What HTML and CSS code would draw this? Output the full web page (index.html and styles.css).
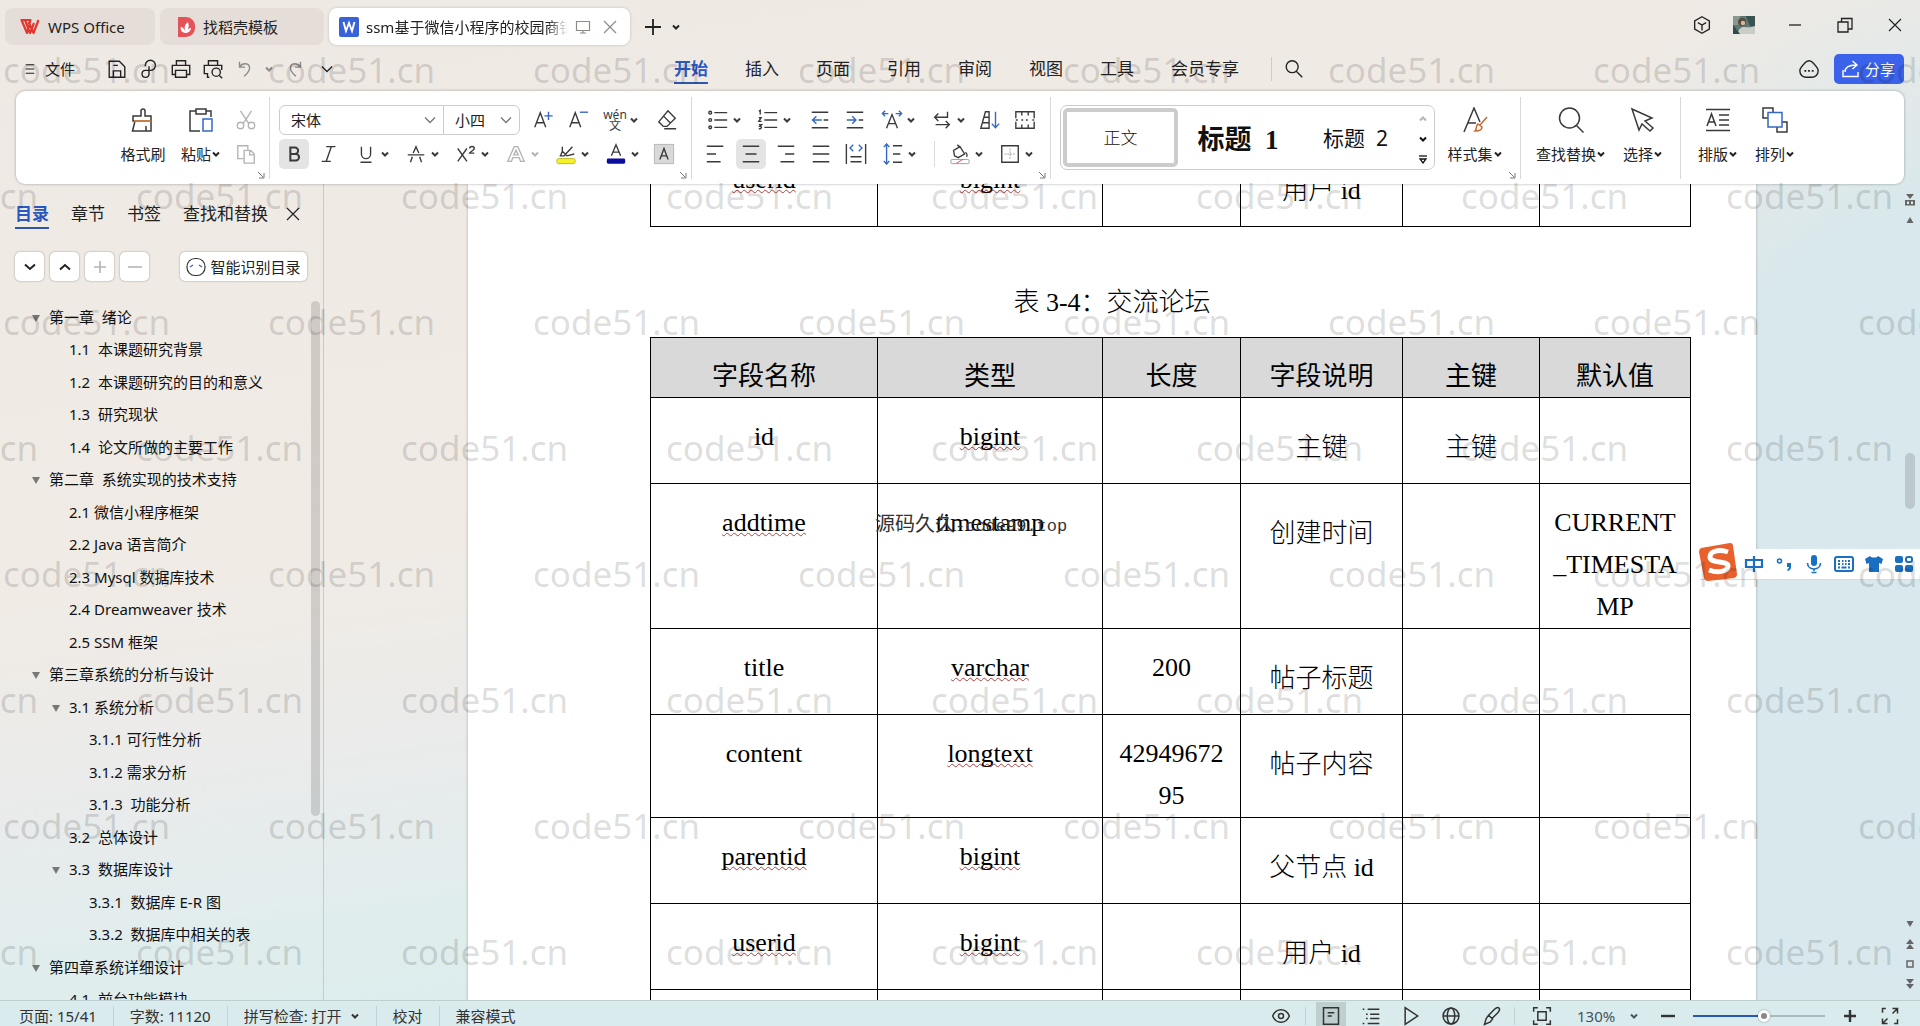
FILE: index.html
```html
<!DOCTYPE html>
<html lang="zh-CN">
<head>
<meta charset="utf-8">
<title>WPS Office</title>
<link rel="stylesheet" href="styles.css">
</head>
<body>
<svg class="defs" aria-hidden="true">
  <symbol id="caret" viewBox="0 0 10 10"><path d="M2 3.500l3 3 3-3" fill="none" stroke="currentColor" stroke-width="2"/></symbol>
  <symbol id="chev" viewBox="0 0 14 14"><path d="M2 4.500l5 5 5-5" fill="none" stroke="currentColor" stroke-width="1.300"/></symbol>
  <symbol id="cross" viewBox="0 0 16 16"><path d="M2 2l12 12M14 2L2 14" fill="none" stroke="currentColor" stroke-width="1.200"/></symbol>
  <symbol id="corner" viewBox="0 0 8 8"><path d="M1 1l5 5M7 2v5H2" fill="none" stroke="currentColor"/></symbol>
</svg>
<div class="app">
  <header class="titlebar">
    <div class="tabs">
      <button class="tab tab-home"><svg class="logo" viewBox="0 0 20 18"><path d="M1.500 2h9l-3.500 13L1.500 2zM18.500 2l-5 13L8.500 4M5 2l5 13 4-10" fill="none" stroke="#e2382f" stroke-width="2.200" stroke-linejoin="round"/></svg>WPS Office</button>
      <button class="tab tab-tpl"><svg class="logo" viewBox="0 0 20 20"><path d="M2 0h8a9 9 0 0 1 9 10 9 9 0 0 1-9 10H2z" fill="#e4535a"/><path d="M9 16c-4-1-5-4-4-6 2 0 3 2 4 4-1-4 0-7 3-9 1 3 1 6-1 9 1-2 2-3 4-3 0 3-3 5-6 5z" fill="#fff"/></svg>找稻壳模板</button>
      <button class="tab tab-doc active"><svg class="logo" viewBox="0 0 20 20"><rect width="20" height="20" rx="2" fill="#3a62d8"/><path d="M4.500 5l2.500 9 3-8 3 8 2.500-9" fill="none" stroke="#fff" stroke-width="1.900"/></svg><span class="doc-name">ssm基于微信小程序的校园商铺</span>
        <svg class="s16 dim" viewBox="0 0 16 16"><path d="M1.500 2.500h13v9h-13zM5 14h6M8 11.500V14" fill="none" stroke="currentColor" stroke-width="1.200"/></svg>
        <svg class="s16 dim"><use href="#cross"/></svg></button>
      <button class="icon-btn new-tab" aria-label="新建"><svg class="s18" viewBox="0 0 18 18"><path d="M9 1v16M1 9h16" stroke="currentColor" stroke-width="1.800"/></svg></button>
      <button class="icon-btn more-tabs" aria-label="更多标签"><svg class="s10"><use href="#caret"/></svg></button>
    </div>
    <div class="win">
      <button class="icon-btn" aria-label="应用"><svg class="i" viewBox="0 0 24 24"><path d="M12 3l8 4.500v9L12 21l-8-4.500v-9zM7.500 9.500L12 12l4.500-2.500M12 12v6"/></svg></button>
      <svg class="avatar" viewBox="0 0 22 18"><rect width="22" height="18" fill="#5d7774"/><path d="M0 0h7v9H0z" fill="#879a92"/><path d="M13 0h9v10h-5z" fill="#37524f"/><circle cx="9" cy="6" r="4" fill="#5a4a40"/><circle cx="10" cy="7" r="2.200" fill="#d9b8a0"/><path d="M5 18c0-5 3-7 6-7 4 0 7 1 11-1v8z" fill="#c8cdc6"/><path d="M0 9l7 9H0z" fill="#2f4a48"/></svg>
      <button class="icon-btn win-btn" aria-label="最小化"><svg class="s16" viewBox="0 0 16 16"><path d="M2 8h12" stroke="currentColor" stroke-width="1.300"/></svg></button>
      <button class="icon-btn win-btn" aria-label="还原"><svg class="s16" viewBox="0 0 16 16"><path d="M1 5h10v10H1zM4.500 5V1.500H15V12h-4" fill="none" stroke="currentColor" stroke-width="1.300"/></svg></button>
      <button class="icon-btn win-btn" aria-label="关闭"><svg class="s16"><use href="#cross"/></svg></button>
    </div>
  </header>

  <div class="menubar">
    <div class="quick">
      <button class="file"><svg class="s12" viewBox="0 0 12 14"><path d="M1 2h10M1 7h10M1 12h10" stroke="currentColor" stroke-width="1.300"/></svg>文件</button>
      <button class="icon-btn" aria-label="保存"><svg class="i" viewBox="0 0 24 24"><path d="M3.500 21V3.500h11l6 6V21zM8 21v-7h8v7M8 8h5"/></svg></button>
      <button class="icon-btn" aria-label="输出"><svg class="i" viewBox="0 0 24 24"><path d="M8 9V8a5.500 5.500 0 1 1 5.500 5.500H8A3.800 3.800 0 1 0 12 17.500V9"/></svg></button>
      <button class="icon-btn" aria-label="打印"><svg class="i" viewBox="0 0 24 24"><path d="M7 8V3h10v5M6 18H2.500V8h19v10H18M6 13.500h12V21H6z"/></svg></button>
      <button class="icon-btn" aria-label="打印预览"><svg class="i" viewBox="0 0 24 24"><path d="M7 8V3h10v5M8 21H6v-4H2.500V8h19v5M19 19l3 3"/><circle cx="15.500" cy="15.500" r="4.500"/></svg></button>
      <button class="icon-btn dim" aria-label="撤销"><svg class="i" viewBox="0 0 24 24"><path d="M6 4v6h6M6.500 9.500C9 5 17 5 17 11c0 4-3 6-6 9"/></svg></button>
      <button class="icon-btn dim" aria-label="撤销列表"><svg class="s10"><use href="#caret"/></svg></button>
      <button class="icon-btn dim redo" aria-label="重做"><svg class="i" viewBox="0 0 24 24"><path d="M18 4v6h-6M17.500 9.500C15 5 7 5 7 11c0 4 3 6 6 9"/></svg></button>
      <button class="icon-btn" aria-label="自定义"><svg class="s14"><use href="#chev"/></svg></button>
    </div>
    <nav class="menu">
      <a href="#" class="on">开始</a><a href="#">插入</a><a href="#">页面</a><a href="#">引用</a><a href="#">审阅</a><a href="#">视图</a><a href="#">工具</a><a href="#">会员专享</a>
    </nav>
    <button class="icon-btn search" aria-label="搜索"><svg class="i" viewBox="0 0 24 24"><circle cx="10" cy="9.500" r="6.500"/><path d="M14.500 14.500L21 21"/></svg></button>
    <div class="share-box">
      <button class="icon-btn" aria-label="评论"><svg class="i" viewBox="0 0 24 24"><path d="M12 3c3 0 4 2 6 4s4 4 4 7c0 4-3 7-7 7H9c-4 0-7-3-7-7 0-3 2-5 4-7s3-4 6-4z"/><path d="M7 14h2M11 14h2M15 14h2" stroke-width="2"/></svg></button>
      <button class="share"><svg class="s20" viewBox="0 0 20 20"><path d="M2 11v6.500h15V13M4 13c0-5 4-7 11-7M11.500 2L16 6l-4.500 4" fill="none" stroke="#fff" stroke-width="1.400"/></svg>分享</button>
    </div>
  </div>

  <section class="ribbon">
    <div class="group g-clip">
      <button class="big w56"><span class="ic"><svg class="i26" viewBox="0 0 26 26"><path d="M11 9V4a2 2 0 0 1 4 0v5h6v5H3V9zM5 14L2.500 24H21V14M16 19v5"/><path d="M4 14h17" stroke="#e2873c"/></svg></span><span class="lb">格式刷</span></button>
      <button class="big w54"><span class="ic"><svg class="i26" viewBox="0 0 26 26"><path d="M8 4H2v20h10M18 4h5v6M8 2h10v5H8z"/><path d="M15 12h9v12h-9z" stroke="#3567c4"/></svg></span><span class="lb">粘贴<svg class="s10"><use href="#caret"/></svg></span></button>
      <div class="rows">
        <div class="row"><button class="sq faint" aria-label="剪切"><svg class="i" viewBox="0 0 24 24"><path d="M6 2l9 14M18 2L9 16"/><circle cx="6" cy="18" r="3.500"/><circle cx="18" cy="18" r="3.500"/></svg></button></div>
        <div class="row"><button class="sq faint" aria-label="复制"><svg class="i" viewBox="0 0 24 24"><path d="M9 17H3V3h11v4M10 8h7l4 4v10H10zM16 8v5h5"/></svg></button></div>
      </div>
      <svg class="corner"><use href="#corner"/></svg>
    </div>

    <div class="group g-font">
      <div class="rows">
        <div class="row">
          <div class="combo">
            <label class="pick pick-font"><select aria-label="字体"><option>宋体</option></select><svg class="s14"><use href="#chev"/></svg></label>
            <label class="pick pick-size"><select aria-label="字号"><option>小四</option></select><svg class="s14"><use href="#chev"/></svg></label>
          </div>
          <button class="sq" aria-label="增大字号"><svg class="i" viewBox="0 0 24 24"><path d="M3 20L9 4l6 16M5 15h8"/><path d="M18 3v9M13.500 7.500h9" stroke="#3567c4"/></svg></button>
          <button class="sq" aria-label="减小字号"><svg class="i" viewBox="0 0 24 24"><path d="M3 20L9 4l6 16M5 15h8"/><path d="M14 3.500h9" stroke="#3567c4"/></svg></button>
          <button class="dd" aria-label="拼音指南"><span class="pinyin"><b>wén</b><b>文</b></span><svg class="s10"><use href="#caret"/></svg></button>
          <button class="sq shift" aria-label="清除格式"><svg class="i" viewBox="0 0 24 24"><path d="M13 2l8 8-9 9H8l-5-5zM8 7.500l8 8M9 21.500h13"/></svg></button>
        </div>
        <div class="row">
          <button class="sq on" aria-label="加粗"><svg class="i" viewBox="0 0 24 24"><path d="M8 5h5a3.300 3.300 0 0 1 0 7H8zM8 12h6a3.500 3.500 0 0 1 0 7H8z" stroke-width="2.200"/></svg></button>
          <button class="sq" aria-label="倾斜"><svg class="i" viewBox="0 0 24 24"><path d="M9 4h10M4 20h10M14.500 4L9 20"/></svg></button>
          <button class="dd" aria-label="下划线"><svg class="i" viewBox="0 0 24 24"><path d="M7 4v8a5 5 0 0 0 10 0V4M6 21h12"/></svg><svg class="s10"><use href="#caret"/></svg></button>
          <button class="dd" aria-label="删除线"><svg class="i" viewBox="0 0 24 24"><path d="M3 13h18M9 11l3-7 3 7M8 15l-2 6M16 15l2 6"/></svg><svg class="s10"><use href="#caret"/></svg></button>
          <button class="dd" aria-label="上标"><svg class="i" viewBox="0 0 24 24"><path d="M3 6l10 14M13 6L3 20M16 6c0-3 5-3 5 0 0 2-4 3-5 5h5"/></svg><svg class="s10"><use href="#caret"/></svg></button>
          <button class="dd faint" aria-label="文字效果"><svg class="i" viewBox="0 0 24 24"><path d="M3 20L10 4h4l7 16h-4l-1.500-4h-7L7 20zM12 8l-2.500 5h5z"/></svg><svg class="s10"><use href="#caret"/></svg></button>
          <button class="dd" aria-label="突出显示"><svg class="i" viewBox="0 0 24 24"><path d="M5 14h5l9-10M8 4v5l5 5 8-2M8 9l-2 5"/><rect x="2" y="17" width="20" height="5.500" rx="2" fill="#f6f227" stroke="#b9b52c" stroke-width="1"/></svg><svg class="s10"><use href="#caret"/></svg></button>
          <button class="dd" aria-label="字体颜色"><svg class="i" viewBox="0 0 24 24"><path d="M7 14l5-12 5 12M9 10h6"/><rect x="2" y="17" width="20" height="5.500" rx="1.500" fill="#0b0b9e" stroke="none"/></svg><svg class="s10"><use href="#caret"/></svg></button>
          <button class="sq" aria-label="字符底纹"><svg class="i" viewBox="0 0 24 24"><rect x="1.500" y="1.500" width="21" height="21" fill="#d9d9d9" stroke="#b5b5b5" stroke-width="1"/><path d="M7.500 18L12 6l4.500 12M9 14h6"/></svg></button>
        </div>
      </div>
      <svg class="corner"><use href="#corner"/></svg>
    </div>

    <div class="group g-para">
      <div class="rows">
        <div class="row">
          <button class="dd" aria-label="项目符号"><svg class="i" viewBox="0 0 24 24"><path d="M8 4h14M8 12h14M8 20h14"/><circle cx="3.500" cy="4" r="1.500"/><circle cx="3.500" cy="12" r="1.500"/><circle cx="3.500" cy="20" r="1.500"/></svg><svg class="s10"><use href="#caret"/></svg></button>
          <button class="dd" aria-label="编号"><svg class="i" viewBox="0 0 24 24"><path d="M8 4h14M8 12h14M8 20h14M2 2.500l1.500-1V6M2 9.500h2.500L2 13.500h3M2 17h3l-2 2c3 0 2 3-1 2.500" /></svg><svg class="s10"><use href="#caret"/></svg></button>
          <button class="sq shift" aria-label="减少缩进"><svg class="i" viewBox="0 0 24 24"><path d="M3 3.500h18M16 12h5M3 20.500h18"/><path d="M14 12H3M8 8l-4 4 4 4" stroke="#3567c4"/></svg></button>
          <button class="sq" aria-label="增加缩进"><svg class="i" viewBox="0 0 24 24"><path d="M3 3.500h18M16 12h5M3 20.500h18"/><path d="M3 12h10M9 8l4 4-4 4" stroke="#3567c4"/></svg></button>
          <button class="dd" aria-label="字符缩放"><svg class="i" viewBox="0 0 24 24"><path d="M6 21l6-15 6 15M8 16h8"/><path d="M2 5h6M16 5h6M4.500 2L1.500 5l3 3M19.500 2l3 3-3 3" stroke="#3567c4"/></svg><svg class="s10"><use href="#caret"/></svg></button>
          <button class="dd" aria-label="显示段落标记"><svg class="i" viewBox="0 0 24 24"><path d="M18 3v6H4M8 5L4 9l4 4M5 17h15M16 13l4 4-4 4"/></svg><svg class="s10"><use href="#caret"/></svg></button>
          <button class="sq" aria-label="排序"><svg class="i" viewBox="0 0 24 24"><path d="M2 21L7 3h4v18zM5 9h6M4 15h7"/><path d="M18 3v17M14 16l4 4.500 4-4.500" stroke="#3567c4"/></svg></button>
          <button class="sq" aria-label="制表位"><svg class="i" viewBox="0 0 24 24"><path d="M2 10V3h20v7M2 14v7h20v-7M2 12h2M8 12h2M13 12h2M20 12h2M8.500 3v4M15.500 3v4M8.500 21v-4M15.500 21v-4"/></svg></button>
        </div>
        <div class="row">
          <button class="sq" aria-label="左对齐"><svg class="i" viewBox="0 0 24 24"><path d="M2 3.500h18M2 12h10M2 20.500h15"/></svg></button>
          <button class="sq on" aria-label="居中"><svg class="i" viewBox="0 0 24 24"><path d="M3 3.500h18M6 12h12M3 20.500h18"/></svg></button>
          <button class="sq" aria-label="右对齐"><svg class="i" viewBox="0 0 24 24"><path d="M3 3.500h18M11 12h10M6 20.500h15"/></svg></button>
          <button class="sq" aria-label="两端对齐"><svg class="i" viewBox="0 0 24 24"><path d="M3 3.500h18M3 12h18M3 20.500h18"/></svg></button>
          <button class="sq" aria-label="分散对齐"><svg class="i" viewBox="0 0 24 24"><path d="M1.500 1v22M22.500 1v22M6 15h12M6 20.500h12"/><path d="M9 2L5.500 5.500 9 9M15 2l3.500 3.500L15 9" stroke="#3567c4"/></svg></button>
          <button class="dd" aria-label="行距"><svg class="i" viewBox="0 0 24 24"><path d="M12 3h10M12 12h8M12 21h10"/><path d="M5 1v22M2 4.500L5 1l3 3.500M2 19.500L5 23l3-3.500" stroke="#3567c4"/></svg><svg class="s10"><use href="#caret"/></svg></button>
          <i class="mini-sep"></i>
          <button class="dd" aria-label="底纹颜色"><svg class="i" viewBox="0 0 24 24"><path d="M5 8l7-4 5 8-7 4-4-2zM9 2l4 3M18 10c2 2 2 4 1 5"/><rect x="2" y="18" width="20" height="4.500" rx="1.500" stroke="#999" stroke-width="1"/><path d="M8 22l7-4" stroke="#d9534f" stroke-width="1"/></svg><svg class="s10"><use href="#caret"/></svg></button>
          <button class="dd" aria-label="边框"><svg class="i" viewBox="0 0 24 24"><path d="M3 3h18v18H3z"/><path d="M12 6v12M6 12h12" stroke="#999" stroke-width="1" stroke-dasharray="2 1"/></svg><svg class="s10"><use href="#caret"/></svg></button>
        </div>
      </div>
      <svg class="corner"><use href="#corner"/></svg>
    </div>

    <div class="group g-style">
      <div class="gallery">
        <button class="st st-body">正文</button>
        <button class="st st-h1">标题&nbsp; 1</button>
        <button class="st st-h2">标题&nbsp; 2</button>
        <div class="arrows">
          <svg class="s10 up faint"><use href="#caret"/></svg>
          <svg class="s10"><use href="#caret"/></svg>
          <svg class="s10" viewBox="0 0 10 10"><path d="M1 2h8" stroke="currentColor" stroke-width="1.300"/><path d="M2 5h6L5 9z" fill="none" stroke="currentColor" stroke-width="1.300"/></svg>
        </div>
      </div>
      <button class="big w62"><span class="ic"><svg class="i26" viewBox="0 0 26 26"><path d="M2 25L12 1l6 14M6 16h8"/><path d="M25 10l-7 8M16 17l4 3c0 3-3 4-7 4 2-2 1-6 3-7z" stroke="#c8692f"/></svg></span><span class="lb">样式集<svg class="s10"><use href="#caret"/></svg></span></button>
      <svg class="corner"><use href="#corner"/></svg>
    </div>

    <div class="group g-find">
      <button class="big w76"><span class="ic"><svg class="i26" viewBox="0 0 26 26"><circle cx="11.500" cy="11" r="10"/><path d="M18.500 18.500l7 7"/></svg></span><span class="lb">查找替换<svg class="s10"><use href="#caret"/></svg></span></button>
      <button class="big w46"><span class="ic"><svg class="i26" viewBox="0 0 26 26"><path d="M2 2l20 9-7 3 8 7-3 3-8-7-3 6z"/></svg></span><span class="lb">选择<svg class="s10"><use href="#caret"/></svg></span></button>
    </div>

    <div class="group g-arr">
      <button class="big w46"><span class="ic"><svg class="i26" viewBox="0 0 26 26"><path d="M1 2.500h24M1 23.500h24M2 19L6.500 7 11 19M4 15h5M14 8h10M14 13h10M14 18h10"/></svg></span><span class="lb">排版<svg class="s10"><use href="#caret"/></svg></span></button>
      <button class="big w46"><span class="ic"><svg class="i26" viewBox="0 0 26 26"><path d="M6 11H1V1h10v4M20 15h5v10H15v-5"/><path d="M6 5.500h14V20H6z" stroke="#3567c4"/></svg></span><span class="lb">排列<svg class="s10"><use href="#caret"/></svg></span></button>
    </div>
  </section>

  <div class="workspace">
    <aside class="side">
      <div class="side-tabs">
        <a href="#" class="on">目录</a><a href="#">章节</a><a href="#">书签</a><a href="#">查找和替换</a>
        <button class="icon-btn" aria-label="关闭"><svg class="s16"><use href="#cross"/></svg></button>
      </div>
      <div class="side-tools">
        <button class="chip" aria-label="展开"><svg class="s14" viewBox="0 0 14 14"><path d="M2 4.500l5 4.500 5-4.500" fill="none" stroke="currentColor" stroke-width="2"/></svg></button>
        <button class="chip" aria-label="收起"><svg class="s14" viewBox="0 0 14 14"><path d="M2 9.500L7 5l5 4.500" fill="none" stroke="currentColor" stroke-width="2"/></svg></button>
        <button class="chip faint" aria-label="提升"><svg class="s14" viewBox="0 0 14 14"><path d="M7 1v12M1 7h12" stroke="currentColor" stroke-width="1.600"/></svg></button>
        <button class="chip faint" aria-label="降低"><svg class="s14" viewBox="0 0 14 14"><path d="M0 7h14" stroke="currentColor" stroke-width="1.600"/></svg></button>
        <button class="chip smart"><svg class="s20" viewBox="0 0 20 20"><rect x="1" y="1.500" width="18" height="17" rx="8" fill="none" stroke="#333" stroke-width="1.200"/><path d="M4 10l3-2M16 10l-3-2" stroke="#3567c4" stroke-width="1.300"/></svg>智能识别目录</button>
      </div>
      <div class="tree-box">
        <ul class="tree">
          <li class="l1 open">第一章&nbsp; 绪论</li>
          <li class="l2">1.1&nbsp; 本课题研究背景</li>
          <li class="l2">1.2&nbsp; 本课题研究的目的和意义</li>
          <li class="l2">1.3&nbsp; 研究现状</li>
          <li class="l2">1.4&nbsp; 论文所做的主要工作</li>
          <li class="l1 open">第二章&nbsp; 系统实现的技术支持</li>
          <li class="l2">2.1 微信小程序框架</li>
          <li class="l2">2.2 Java 语言简介</li>
          <li class="l2">2.3 Mysql 数据库技术</li>
          <li class="l2">2.4 Dreamweaver 技术</li>
          <li class="l2">2.5 SSM 框架</li>
          <li class="l1 open">第三章系统的分析与设计</li>
          <li class="l2 open">3.1 系统分析</li>
          <li class="l3">3.1.1 可行性分析</li>
          <li class="l3">3.1.2 需求分析</li>
          <li class="l3">3.1.3&nbsp; 功能分析</li>
          <li class="l2">3.2&nbsp; 总体设计</li>
          <li class="l2 open">3.3&nbsp; 数据库设计</li>
          <li class="l3">3.3.1&nbsp; 数据库 E-R 图</li>
          <li class="l3">3.3.2&nbsp; 数据库中相关的表</li>
          <li class="l1 open">第四章系统详细设计</li>
          <li class="l2">4.1&nbsp; 前台功能模块</li>
        </ul>
        <i class="side-thumb"></i>
      </div>
    </aside>

    <main class="canvas">
      <article class="page">
        <table class="grid prev">
          <colgroup><col class="c1"><col class="c2"><col class="c3"><col class="c4"><col class="c5"><col class="c6"></colgroup>
          <tbody><tr><td><u>userid</u></td><td><u>bigint</u></td><td></td><td class="zh">用户 id</td><td></td><td></td></tr></tbody>
        </table>
        <p class="caption">表 3-4：交流论坛</p>
        <table class="grid">
          <colgroup><col class="c1"><col class="c2"><col class="c3"><col class="c4"><col class="c5"><col class="c6"></colgroup>
          <thead><tr><th>字段名称</th><th>类型</th><th>长度</th><th>字段说明</th><th>主键</th><th>默认值</th></tr></thead>
          <tbody>
            <tr><td>id</td><td><u>bigint</u></td><td></td><td class="zh">主键</td><td class="zh">主键</td><td></td></tr>
            <tr><td><u>addtime</u></td><td>timestamp</td><td></td><td class="zh">创建时间</td><td></td><td>CURRENT<br>_TIMESTA<br>MP</td></tr>
            <tr><td>title</td><td><u>varchar</u></td><td>200</td><td class="zh">帖子标题</td><td></td><td></td></tr>
            <tr><td>content</td><td><u>longtext</u></td><td>42949672<br>95</td><td class="zh">帖子内容</td><td></td><td></td></tr>
            <tr><td><u>parentid</u></td><td><u>bigint</u></td><td></td><td class="zh">父节点 id</td><td></td><td></td></tr>
            <tr><td><u>userid</u></td><td><u>bigint</u></td><td></td><td class="zh">用户 id</td><td></td><td></td></tr>
            <tr><td></td><td></td><td></td><td class="zh">&nbsp;</td><td></td><td></td></tr>
          </tbody>
        </table>
      </article>
      <div class="vscroll">
        <svg class="s12" viewBox="0 0 12 12"><path d="M2 0h8L6 5zM1 6h10v1.500H1zM1 10h10v1.500H1zM1 6h2v5H1zM5 6h2v5H5zM9 6h2v5H9z"/></svg>
        <svg class="s12" viewBox="0 0 12 12"><path d="M6 3l3.500 6h-7z"/></svg>
        <i class="v-thumb"></i>
        <svg class="s12" viewBox="0 0 12 12"><path d="M6 9l3.500-6h-7z"/></svg>
        <svg class="s12" viewBox="0 0 12 12"><path d="M6 1l4 5H2zM6 6l4 5H2z"/></svg>
        <svg class="s12" viewBox="0 0 12 12"><rect x="3" y="3" width="6" height="6" fill="none" stroke="#666" stroke-width="1.500"/></svg>
        <svg class="s12" viewBox="0 0 12 12"><path d="M6 6L2 1h8zM6 11L2 6h8z"/></svg>
      </div>
    </main>
  </div>

  <footer class="status">
    <div class="st-left">
      <span>页面: 15/41</span><span>字数: 11120</span><span>拼写检查: 打开<svg class="s10"><use href="#caret"/></svg></span><span>校对</span><span>兼容模式</span>
    </div>
    <div class="st-right">
      <button class="sb sb-eye" aria-label="护眼"><svg class="i22" viewBox="0 0 24 24"><path d="M2 12c4-10 16-10 20 0-4 10-16 10-20 0z"/><circle cx="12" cy="12" r="3"/></svg></button>
      <button class="sb on" aria-label="页面视图"><svg class="i22" viewBox="0 0 24 24"><path d="M3 2h18v20H3zM8 8h8M8 12h5"/></svg></button>
      <button class="sb" aria-label="大纲"><svg class="i22" viewBox="0 0 24 24"><path d="M2 4h2M8 4h14M6 10h2M11 10h11M6 15h2M11 15h11M2 21h2M8 21h14"/></svg></button>
      <button class="sb" aria-label="阅读"><svg class="i22" viewBox="0 0 24 24"><path d="M5 2l15 10L5 22z"/></svg></button>
      <button class="sb" aria-label="网页视图"><svg class="i22" viewBox="0 0 24 24"><circle cx="12" cy="12" r="9.500"/><ellipse cx="12" cy="12" rx="4.500" ry="9.500"/><path d="M2.500 12h19"/></svg></button>
      <button class="sb sb-pen" aria-label="写作"><svg class="i22" viewBox="0 0 24 24"><path d="M20 2c2 2 1 4-1 6l-7 7-4-4 7-7c2-2 3-3 5-2zM8 11l-3 4-2 7 7-3 3-4"/></svg></button>
      <button class="sb" aria-label="适应页面"><svg class="i22" viewBox="0 0 24 24"><path d="M2 7V2h5M17 2h5v5M22 17v5h-5M7 22H2v-5M7 7h10v10H7z"/></svg></button>
      <button class="zoom">130%<svg class="s10"><use href="#caret"/></svg></button>
      <button class="sb" aria-label="缩小"><svg class="s14" viewBox="0 0 14 14"><path d="M0 7h14" stroke="currentColor" stroke-width="2.400"/></svg></button>
      <input type="range" class="slider" aria-label="缩放" min="0" max="100" value="54">
      <button class="sb" aria-label="放大"><svg class="s14" viewBox="0 0 14 14"><path d="M1 7h12M7 1v12" stroke="currentColor" stroke-width="2.400"/></svg></button>
      <button class="sb" aria-label="全屏"><svg class="i22" viewBox="0 0 24 24"><path d="M3 8V3h4M21 16v5h-4M15 3h6v6M21 3l-6 6M9 21H3v-6M3 21l6-6"/></svg></button>
    </div>
  </footer>

  <div class="ime">
    <svg class="ime-logo" viewBox="0 0 40 40"><path d="M3 6L32 1q3 0 3 3l4 28q0 3-3 4L10 39q-3 0-4-3L1 10q0-3 2-4z" fill="#e8602c"/><path d="M30 10c-9-3-18-1-18 5 0 7 18 3 18 9 0 6-11 7-19 4" fill="none" stroke="#fff" stroke-width="5"/></svg>
    <svg class="ime-i" viewBox="0 0 20 20"><path d="M2 6h16v7H2zM10 2v16" fill="none" stroke="#1a6fc0" stroke-width="2.200"/></svg>
    <svg class="ime-i" viewBox="0 0 20 20"><circle cx="5.500" cy="7" r="2" fill="none" stroke="#1a6fc0" stroke-width="1.500"/><path d="M13 9h4v4c0 2-1 3-3 4l-1-1c1-1 2-2 2-3h-2z" fill="#1a6fc0"/></svg>
    <svg class="ime-i" viewBox="0 0 20 20"><rect x="7" y="1" width="6" height="11" rx="3" fill="#1a6fc0"/><path d="M3.500 9c0 8 13 8 13 0M10 15v2M7.500 18.500h5" fill="none" stroke="#1a6fc0" stroke-width="1.600"/></svg>
    <svg class="ime-i" viewBox="0 0 20 20"><rect x="1" y="3" width="18" height="14" rx="2" fill="none" stroke="#1a6fc0" stroke-width="2"/><path d="M4 7h2M8 7h1.500M11 7h1.500M14 7h2M4 10h2M8 10h1.500M11 10h1.500M14 10h2M4 13.500h2M7.500 13.500h5M14 13.500h2" stroke="#1a6fc0" stroke-width="2"/></svg>
    <svg class="ime-i" viewBox="0 0 20 20"><path d="M6 2c1 2 7 2 8 0l5 3-1.500 5-2.500-1v9H5V9l-2.500 1L1 5z" fill="#1a6fc0"/></svg>
    <svg class="ime-i" viewBox="0 0 20 20"><rect x="1" y="2" width="8" height="7" rx="2" fill="#1a6fc0"/><rect x="12" y="3" width="6" height="5" rx="2" fill="none" stroke="#1a6fc0" stroke-width="2"/><rect x="1" y="11" width="8" height="7" rx="2" fill="#1a6fc0"/><rect x="11" y="11" width="8" height="7" rx="2" fill="#1a6fc0"/></svg>
  </div>

  <div class="stamp">源码久久<span>-code99.top</span></div>
  <div class="marks" aria-hidden="true">
    <div><span>code51.cn</span><span>code51.cn</span><span>code51.cn</span><span>code51.cn</span><span>code51.cn</span><span>code51.cn</span><span>code51.cn</span><span>code51.cn</span></div>
    <div><span>code51.cn</span><span>code51.cn</span><span>code51.cn</span><span>code51.cn</span><span>code51.cn</span><span>code51.cn</span><span>code51.cn</span><span>code51.cn</span></div>
    <div><span>code51.cn</span><span>code51.cn</span><span>code51.cn</span><span>code51.cn</span><span>code51.cn</span><span>code51.cn</span><span>code51.cn</span><span>code51.cn</span></div>
    <div><span>code51.cn</span><span>code51.cn</span><span>code51.cn</span><span>code51.cn</span><span>code51.cn</span><span>code51.cn</span><span>code51.cn</span><span>code51.cn</span></div>
    <div><span>code51.cn</span><span>code51.cn</span><span>code51.cn</span><span>code51.cn</span><span>code51.cn</span><span>code51.cn</span><span>code51.cn</span><span>code51.cn</span></div>
    <div><span>code51.cn</span><span>code51.cn</span><span>code51.cn</span><span>code51.cn</span><span>code51.cn</span><span>code51.cn</span><span>code51.cn</span><span>code51.cn</span></div>
    <div><span>code51.cn</span><span>code51.cn</span><span>code51.cn</span><span>code51.cn</span><span>code51.cn</span><span>code51.cn</span><span>code51.cn</span><span>code51.cn</span></div>
    <div><span>code51.cn</span><span>code51.cn</span><span>code51.cn</span><span>code51.cn</span><span>code51.cn</span><span>code51.cn</span><span>code51.cn</span><span>code51.cn</span></div>
  </div>
</div>
</body>
</html>
```
FILE: styles.css
```css
* { box-sizing: border-box; }
body {
  margin: 0;
  font: 15px/20px "Noto Sans", "Noto Sans CJK SC", sans-serif;
  color: #222;
}
button, select { font: inherit; color: inherit; background: none; border: 0; padding: 0; margin: 0; }
a { color: inherit; text-decoration: none; }
svg { flex: none; display: block; }
.defs { position: absolute; width: 0; height: 0; }

.app {
  position: relative;
  display: flex;
  flex-direction: column;
  height: 100vh;
  overflow: hidden;
  background:
    radial-gradient(ellipse 30% 75% at 104% 65%, #d8e8ec 60%, #d8e8ec00),
    linear-gradient(172deg, #efe9e4 0%, #f1ebe5 45%, #ebebea 60%, #e1eded 74%, #d9ecec 88%, #d9ebed 100%);
}

/* icon sizes */
.i, .i22, .i26 { fill: none; stroke: currentColor; stroke-width: 1.5; }
.i { width: 22px; height: 22px; }
.i22 { width: 20px; height: 20px; stroke-width: 1.8; }
.i26 { width: 26px; height: 26px; }
.s10 { width: 10px; height: 10px; }
.s12 { width: 12px; height: 12px; }
.s14 { width: 14px; height: 14px; }
.s16 { width: 16px; height: 16px; }
.s18 { width: 18px; height: 18px; }
.s20 { width: 20px; height: 20px; }
.dim { color: #8d8a88; }
.faint { color: #b4b4b4; }
.icon-btn { display: flex; align-items: center; justify-content: center; }

/* title bar */
.titlebar { display: flex; justify-content: space-between; height: 45px; padding: 8px 17px 0 5px; }
.tabs { display: flex; gap: 5px; align-items: stretch; }
.tab { display: flex; align-items: center; border-radius: 8px; background: #e5ddd8; height: 37px; }
.tab.active { background: #fff; box-shadow: 0 0 3px #0003; }
.tab-home { width: 150px; padding-left: 15px; gap: 8px; }
.tab-tpl { width: 164px; padding-left: 16px; gap: 7px; }
.tab-doc { width: 301px; padding-left: 10px; gap: 7px; }
.logo { width: 20px; height: 20px; }
.doc-name {
  width: 202px;
  overflow: hidden;
  white-space: nowrap;
  text-align: left;
  -webkit-mask-image: linear-gradient(to right, #000 90%, transparent);
  mask-image: linear-gradient(to right, #000 90%, transparent);
}
.tab-doc .s16 + .s16 { margin-left: 4px; }
.new-tab { margin-left: 9px; }
.more-tabs { margin-left: 4px; }
.win { display: flex; align-items: center; height: 34px; }
.win > .icon-btn:first-child { margin-right: 20px; }
.avatar { width: 22px; height: 18px; margin-right: 15px; }
.win-btn { width: 50px; }
.win-btn:last-child { width: 16px; margin-left: 17px; }

/* menu bar */
.menubar { display: flex; align-items: center; height: 46px; padding: 2px 16px 0 24px; }
.quick { display: flex; align-items: center; gap: 10px; width: 650px; }
.file { display: flex; align-items: center; gap: 9px; margin-right: 21px; }
.quick .s10 { margin-left: -2px; }
.redo { margin-right: 4px; }
.menu { display: flex; gap: 37px; font-size: 17px; line-height: 24px; padding-right: 32px; border-right: 1px solid #cfcac6; }
.menu .on, .side-tabs .on { color: #2b57c0; font-weight: 700; position: relative; }
.menu .on::after, .side-tabs .on::after {
  content: "";
  position: absolute;
  left: 0;
  right: 0;
  bottom: -3px;
  height: 2px;
  background: #2f55ae;
}
.search { margin-left: 11px; }
.share-box { display: flex; align-items: center; gap: 14px; margin-left: auto; }
.share { display: flex; align-items: center; gap: 4px; height: 30px; width: 70px; padding-left: 7px; border-radius: 5px; background: #3a62ea; color: #fff; }

/* ribbon */
.ribbon {
  display: flex;
  height: 93px;
  margin: 0 16px;
  padding: 6px 0 5px;
  background: #fff;
  border-radius: 9px;
  box-shadow: 0 0 3px #0005;
  color: #3a3a3a;
  position: relative;
  z-index: 2;
}
.group { display: flex; position: relative; padding: 8px 8px 0 9px; border-right: 1px solid #d8d8d8; }
.group:last-child { border-right: 0; }
.g-clip { padding-left: 99px; gap: 3px; padding-right: 8px; }
.g-font { padding-right: 9px; }
.g-para { padding-right: 7px; }
.g-style { padding-right: 14px; gap: 9px; }
.g-find { padding-left: 12px; padding-right: 14px; gap: 11px; }
.g-arr { padding-left: 14px; gap: 11px; }
.corner { position: absolute; right: 4px; bottom: 0; width: 8px; height: 8px; color: #777; }
.rows { display: flex; flex-direction: column; gap: 4px; }
.row { display: flex; height: 30px; }
.sq, .dd { display: flex; align-items: center; height: 30px; border-radius: 5px; }
.sq { width: 30px; justify-content: center; margin-right: 5px; }
.sq:last-child { margin-right: 0; }
.sq.on { background: #e4e4e4; }
.shift { margin-left: 4px; }
.dd { width: 50px; padding-left: 6px; gap: 3px; }
.pinyin { display: flex; flex-direction: column; width: 22px; font-size: 12px; line-height: 11px; text-align: center; align-items: center; }
.pinyin b { font-weight: 400; }
.mini-sep { width: 1px; margin: 2px 8px; background: #ddd; }
.big { display: flex; flex-direction: column; gap: 4px; height: 64px; }
.ic, .lb { display: flex; height: 30px; align-items: center; justify-content: center; width: 100%; white-space: nowrap; }
.lb { color: #222; }
.w46 { width: 46px; }
.w54 { width: 54px; }
.w56 { width: 56px; }
.w62 { width: 62px; }
.w76 { width: 76px; }
.combo { display: flex; width: 241px; border: 1px solid #ccc; border-radius: 6px; margin-right: 8px; }
.pick { display: flex; align-items: center; padding: 0 6px 0 11px; color: #777; }
.pick select { flex: 1; appearance: none; color: #222; height: 100%; outline: 0; }
.pick-font { width: 163px; }
.pick-size { flex: 1; border-left: 1px solid #ccc; }
.gallery { display: flex; width: 375px; height: 65px; border: 1px solid #ccc; border-radius: 7px; padding: 2px; color: #111; }
.st { white-space: nowrap; }
.st-body { width: 115px; height: 59px; border: 4px solid #ccc; border-radius: 5px; font-size: 17px; font-weight: 300; }
.st-h1 { width: 120px; font: 700 27px "Liberation Serif", "Noto Sans CJK SC", serif; }
.st-h2 { width: 115px; font-size: 21px; }
.arrows { display: flex; flex-direction: column; justify-content: space-between; margin-left: auto; padding: 6px 4px 3px 0; }
.up { transform: rotate(180deg); }

/* workspace */
.workspace { display: flex; flex: 1; min-height: 0; }
.side { display: flex; flex-direction: column; width: 324px; border-right: 1px solid #cbc9c7; }
.side-tabs { display: flex; gap: 22px; align-items: center; font-size: 17px; line-height: 24px; padding: 18px 0 0 15px; white-space: nowrap; }
.side-tabs .icon-btn { margin-left: -5px; }
.side-tools { display: flex; gap: 6px; padding: 26px 16px 0 15px; }
.chip { display: flex; align-items: center; justify-content: center; width: 29px; height: 29px; background: #fff; border-radius: 5px; box-shadow: 0 0 2px #0006; }
.smart { width: 127px; gap: 4px; margin-left: auto; }
.tree-box { display: flex; justify-content: space-between; flex: 1; min-height: 0; margin-top: 20px; }
.tree { list-style: none; margin: 0; padding: 0; overflow: hidden; flex: 1; line-height: 32px; color: #111; }
.tree li { position: relative; height: 32px; white-space: nowrap; }
.tree li:nth-child(even) { height: 33px; }
.l1 { padding-left: 49px; }
.l2 { padding-left: 69px; }
.l3 { padding-left: 89px; }
.open::before {
  content: "";
  display: inline-block;
  margin-left: -17px;
  margin-right: 9px;
  border: 4px solid transparent;
  border-top: 7px solid #777;
  border-bottom: 0;
  vertical-align: 1px;
}
.side-thumb { width: 9px; height: 515px; border-radius: 5px; background: #00000022; margin-right: 3px; }

.canvas { display: flex; flex: 1; justify-content: center; overflow: hidden; }
.page {
  width: 1288px;
  margin: 0 auto;
  padding: 0 65px 0 182px;
  background: #fff;
  box-shadow: 0 0 3px #0004;
  color: #000;
  font-family: "Liberation Serif", "Noto Sans CJK SC", serif;
  font-size: 26px;
  line-height: 42px;
  text-align: center;
}
.grid { width: 1041px; table-layout: fixed; border-collapse: collapse; }
.grid.prev { margin-top: -44px; }
.c1 { width: 227px; }
.c2 { width: 225px; }
.c3 { width: 138px; }
.c4 { width: 162px; }
.c5 { width: 137px; }
.c6 { width: 151px; }
.grid td, .grid th { border: 1px solid #000; padding: 18px 0 0; vertical-align: top; }
.grid th { background: #d9d9d9; font-weight: 400; line-height: 41px; }
.grid .zh { padding: 29px 0 14px; font-weight: 300; }
.grid u { text-decoration: underline wavy #b04040 1px; text-decoration-skip-ink: none; text-underline-offset: 1px; }
.caption { margin: 55px 0 13px; font-weight: 300; padding-right: 117px; }

.vscroll { display: flex; flex-direction: column; align-items: center; width: 20px; padding: 10px 0 10px; gap: 8px; fill: #666; }
.v-thumb { width: 10px; height: 56px; margin: 219px 0 auto; border-radius: 5px; background: #bcc8cb; }

/* status bar */
.status { display: flex; justify-content: space-between; height: 26px; padding-top: 4px; border-top: 1px solid #bfcfd0; background: #d9ebec; color: #333; }
.st-left, .st-right { display: flex; align-items: center; }
.st-left { padding-left: 3px; }
.st-left span { display: flex; align-items: center; gap: 8px; padding: 0 16px; border-right: 1px solid #c3d2d3; }
.st-left span:last-child { border: 0; }
.st-right { padding-right: 5px; }
.sb { display: flex; align-items: center; justify-content: center; width: 30px; height: 28px; margin-right: 10px; }
.sb.on { background: #bfcfd0; }
.sb-eye { width: 50px; border-right: 1px solid #c3d2d3; height: 18px; }
.sb-pen { width: 38px; padding-right: 8px; margin: 0 12px 0 1px; border-right: 1px solid #c3d2d3; height: 18px; }
.zoom { display: flex; align-items: center; gap: 14px; width: 66px; margin: 0 10px; color: #44555f; }
.slider { appearance: none; width: 132px; height: 12px; margin: 0 10px 0 0; background: linear-gradient(to right, #2758b4 54%, #a9bcbe 54%) center / 100% 2px no-repeat; }
.slider::-webkit-slider-thumb { appearance: none; width: 12px; height: 12px; border-radius: 50%; border: 3px solid #fff; background: #888; box-shadow: 0 0 2px #0006; }

/* floating layers */
.ime {
  position: absolute;
  right: 0;
  top: 549px;
  z-index: 3;
  display: flex;
  align-items: center;
  gap: 10px;
  width: 220px;
  height: 31px;
  padding-right: 5px;
  background: linear-gradient(to right, transparent 20px, #fff 20px);
  border-bottom: 1px solid #cfdfe2;
}
.ime-logo { width: 40px; height: 40px; margin: -4px -4px 0 -2px; }
.ime-i { width: 20px; height: 20px; }
.stamp { position: absolute; left: 875px; top: 512px; z-index: 3; font-size: 20px; line-height: 24px; color: #333; white-space: nowrap; }
.stamp span { font: 17px "Liberation Mono", monospace; }
.marks {
  position: absolute;
  inset: 0;
  z-index: 4;
  overflow: hidden;
  pointer-events: none;
  padding: 7px 0 0 3px;
  font-size: 35px;
  line-height: 126px;
  color: #00000026;
}
.marks div { display: flex; height: 126px; }
.marks div:nth-child(even) { margin-left: -132px; }
.marks span { flex: 0 0 265px; }
```
